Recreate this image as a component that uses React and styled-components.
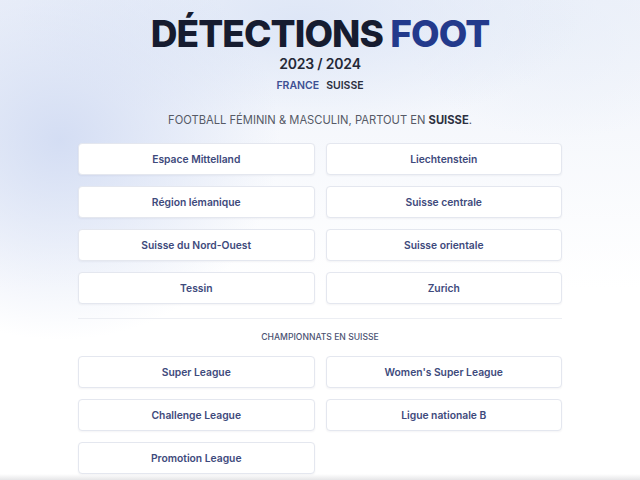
import styled, { createGlobalStyle } from 'styled-components';

const GlobalStyle = createGlobalStyle`
  html, body {
    margin: 0;
    padding: 0;
    height: 100%;
  }
  body {
    font-family: Inter, "Noto Sans", sans-serif;
    background: #fff;
    overflow: hidden;
  }
`

const regions = [
  'Espace Mittelland',
  'Liechtenstein',
  'Région lémanique',
  'Suisse centrale',
  'Suisse du Nord-Ouest',
  'Suisse orientale',
  'Tessin',
  'Zurich',
]

const leagues = [
  'Super League',
  "Women's Super League",
  'Challenge League',
  'Ligue nationale B',
  'Promotion League',
]

const App = () => {
  return (
    <Page>
      <GlobalStyle />
      <Header>
        <Title>DÉTECTIONS <span>FOOT</span></Title>
        <Season>2023 / 2024</Season>
        <Countries>
          <Country $active>FRANCE</Country>
          <Country>SUISSE</Country>
        </Countries>
      </Header>
      <Content>
        <Tagline>FOOTBALL FÉMININ &amp; MASCULIN, PARTOUT EN <strong>SUISSE</strong>.</Tagline>
        <Grid>
          {regions.map((r) => (
            <LinkButton key={r}>{r}</LinkButton>
          ))}
        </Grid>
        <Divider />
        <SectionLabel>CHAMPIONNATS EN SUISSE</SectionLabel>
        <Grid>
          {leagues.map((l) => (
            <LinkButton key={l}>{l}</LinkButton>
          ))}
        </Grid>
      </Content>
      <BottomBar />
    </Page>
  );
}

export default App;

const Page = styled.div`
  position: relative;
  width: 640px;
  height: 480px;
  overflow: hidden;
  background:
    radial-gradient(ellipse 220px 200px at 60px 140px, rgba(210, 220, 243, 0.95), rgba(210, 220, 243, 0) 100%),
    radial-gradient(ellipse 280px 110px at 300px 20px, rgba(220, 229, 246, 0.9), rgba(220, 229, 246, 0) 100%),
    radial-gradient(ellipse 160px 120px at 560px 20px, rgba(232, 238, 248, 0.7), rgba(232, 238, 248, 0) 100%),
    linear-gradient(180deg, #eef2fa 0%, #ffffff 60%);
  display: flex;
  flex-direction: column;
  align-items: center;
`

const Header = styled.div`
  display: flex;
  flex-direction: column;
  align-items: center;
  padding-top: 13px;
`

const Title = styled.h1`
  margin: 0;
  font-size: 37px;
  font-weight: 800;
  line-height: 42px;
  color: #161c30;
  letter-spacing: -0.9px;
  span {
    color: #233a8c;
  }
`

const Season = styled.div`
  font-size: 14px;
  font-weight: 600;
  line-height: 18px;
  color: #242837;
  letter-spacing: -0.2px;
`

const Countries = styled.div`
  display: flex;
  gap: 7px;
  margin-top: 6px;
  line-height: 14px;
`

const Country = styled.span`
  font-size: 10.5px;
  font-weight: 600;
  color: ${(p) => (p.$active ? '#3d4f93' : '#2a2f40')};
`

const Content = styled.div`
  width: 484px;
  display: flex;
  flex-direction: column;
  align-items: center;
  margin-top: 20px;
`

const Tagline = styled.p`
  margin: 0 0 16px;
  font-size: 11.2px;
  line-height: 14px;
  color: #565a66;
  strong {
    font-weight: 700;
    color: #2c3040;
  }
`

const Grid = styled.div`
  width: 100%;
  display: grid;
  grid-template-columns: 1fr 1fr;
  gap: 11px;
`

const LinkButton = styled.div`
  height: 32px;
  box-sizing: border-box;
  display: flex;
  align-items: center;
  justify-content: center;
  background: #fff;
  border: 1px solid #e4e7ef;
  border-radius: 4px;
  box-shadow: 0 1px 2px rgba(30, 40, 80, 0.05);
  font-size: 10.3px;
  font-weight: 600;
  color: #3e4a7c;
`

const Divider = styled.div`
  width: 100%;
  height: 1px;
  background: #eceef3;
  margin-top: 14px;
`

const SectionLabel = styled.div`
  margin: 12px 0 13px;
  font-size: 8.6px;
  line-height: 12px;
  font-weight: 500;
  color: #4b5272;
`

const BottomBar = styled.div`
  position: absolute;
  left: 0;
  right: 0;
  bottom: 0;
  height: 6px;
  background: linear-gradient(180deg, rgba(230, 230, 232, 0), #e6e6e8);
`
